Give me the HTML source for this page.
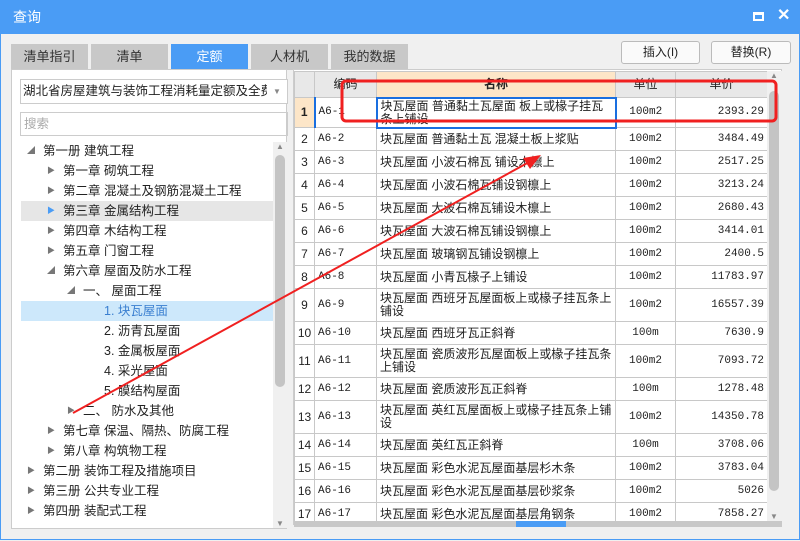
<!DOCTYPE html>
<html><head><meta charset="utf-8"><style>
*{box-sizing:border-box;margin:0;padding:0}
body{width:800px;height:540px;background:#f0f0f0;font-family:"Liberation Sans","Noto Sans CJK SC",sans-serif;font-size:12px;color:#222;position:relative;overflow:hidden;border:1px solid #4a9cf5}
.title{position:absolute;left:0;top:0;width:800px;height:33px;background:#4a9cf5;color:#fff;font-size:14px;padding:6px 12px}
.tab{position:absolute;top:43px;height:26px;background:#c8c8c8;text-align:center;line-height:26px;font-size:13px;color:#333}
.btn{position:absolute;top:40px;height:23px;border:1px solid #bbb;border-radius:3px;background:#fafafa;text-align:center;line-height:21px;font-size:12px}
.left{position:absolute;left:10px;top:68px;width:276px;height:460px;background:#fff;border:1px solid #ccc}
.tree div{position:absolute;height:20px;line-height:20px;font-size:12.5px;white-space:nowrap}
.tri{position:absolute;font-size:8px;color:#777}
table{border-collapse:collapse;position:absolute;left:293px;top:70px;background:#fff;table-layout:fixed}
td{border:1px solid #c8c8c8;padding:0 3px;font-size:12px;line-height:13px;vertical-align:middle}
td.n{text-align:center;background:#fff;padding:0}
td.c{font-family:"Liberation Mono","Noto Sans CJK SC",monospace;font-size:11px}
td.u{text-align:center;font-family:"Liberation Mono","Noto Sans CJK SC",monospace;font-size:11px}
td.p{text-align:right;font-family:"Liberation Mono",monospace;font-size:11px}
tr.h td{background:#e8e8e8;text-align:center;height:26px}
</style></head><body>
<div class="title">查询<span style="position:absolute;left:752px;top:11px;width:11px;height:9px;border:2px solid #fff;border-top-width:3px"></span><span style="position:absolute;left:776px;top:4px;font-size:16px;font-weight:bold">✕</span></div>
<div class="tab" style="left:10px;width:77px">清单指引</div>
<div class="tab" style="left:90px;width:77px">清单</div>
<div class="tab" style="left:170px;width:77px;background:#4a9cf5;color:#fff">定额</div>
<div class="tab" style="left:250px;width:77px">人材机</div>
<div class="tab" style="left:330px;width:77px">我的数据</div>
<div class="btn" style="left:620px;width:79px">插入(I)</div>
<div class="btn" style="left:710px;width:80px">替换(R)</div>
<div class="left">
<div style="position:absolute;left:8px;top:9px;width:268px;height:25px;border:1px solid #ccc;line-height:23px;padding-left:2px;font-size:12.5px;white-space:nowrap;overflow:hidden">湖北省房屋建筑与装饰工程消耗量定额及全费用<span style="position:absolute;right:0;top:0;width:20px;background:#fff;color:#888;font-size:8px;text-align:center">▼</span></div>
<div style="position:absolute;left:8px;top:42px;width:268px;height:24px;border:1px solid #ccc;line-height:22px;padding-left:3px;color:#aaa;font-size:12.5px">搜索</div>
<div style="position:absolute;left:261px;top:72px;width:14px;height:386px;background:#f0f0f0"><div style="position:absolute;left:2px;top:13px;width:10px;height:232px;background:#c4c4c4;border-radius:5px"></div><span style="position:absolute;left:3px;top:0;font-size:8px;color:#888">▲</span><span style="position:absolute;left:3px;bottom:0;font-size:8px;color:#888">▼</span></div>
<div class="tree">
<div style="left:0;top:71px;"><span class="tri" style="left:15px;top:0">◢</span><span style="margin-left:31px">第一册 建筑工程</span></div>
<div style="left:0;top:91px"><span class="tri" style="left:35px">▶</span><span style="margin-left:51px">第一章 砌筑工程</span></div>
<div style="left:0;top:111px"><span class="tri" style="left:35px">▶</span><span style="margin-left:51px">第二章 混凝土及钢筋混凝土工程</span></div>
<div style="left:9px;top:131px;width:252px;background:#e6e6e6"><span class="tri" style="left:26px;color:#4a9cf5">▶</span><span style="margin-left:42px">第三章 金属结构工程</span></div>
<div style="left:0;top:151px"><span class="tri" style="left:35px">▶</span><span style="margin-left:51px">第四章 木结构工程</span></div>
<div style="left:0;top:171px"><span class="tri" style="left:35px">▶</span><span style="margin-left:51px">第五章 门窗工程</span></div>
<div style="left:0;top:191px"><span class="tri" style="left:35px">◢</span><span style="margin-left:51px">第六章 屋面及防水工程</span></div>
<div style="left:0;top:211px"><span class="tri" style="left:55px">◢</span><span style="margin-left:71px">一、 屋面工程</span></div>
<div style="left:9px;top:231px;width:252px;background:#cde8fb;color:#3a7fd0"><span style="margin-left:83px">1. 块瓦屋面</span></div>
<div style="left:0;top:251px"><span style="margin-left:92px">2. 沥青瓦屋面</span></div>
<div style="left:0;top:271px"><span style="margin-left:92px">3. 金属板屋面</span></div>
<div style="left:0;top:291px"><span style="margin-left:92px">4. 采光屋面</span></div>
<div style="left:0;top:311px"><span style="margin-left:92px">5. 膜结构屋面</span></div>
<div style="left:0;top:331px"><span class="tri" style="left:55px">▶</span><span style="margin-left:71px">二、 防水及其他</span></div>
<div style="left:0;top:351px"><span class="tri" style="left:35px">▶</span><span style="margin-left:51px">第七章 保温、隔热、防腐工程</span></div>
<div style="left:0;top:371px"><span class="tri" style="left:35px">▶</span><span style="margin-left:51px">第八章 构筑物工程</span></div>
<div style="left:0;top:391px"><span class="tri" style="left:15px">▶</span><span style="margin-left:31px">第二册 装饰工程及措施项目</span></div>
<div style="left:0;top:411px"><span class="tri" style="left:15px">▶</span><span style="margin-left:31px">第三册 公共专业工程</span></div>
<div style="left:0;top:431px"><span class="tri" style="left:15px">▶</span><span style="margin-left:31px">第四册 装配式工程</span></div>
</div></div>
<div style="position:absolute;left:292px;top:68px;width:489px;height:456px;background:#fff;border:1px solid #ccc"></div>
<table>
<colgroup><col style="width:20px"><col style="width:62px"><col style="width:239px"><col style="width:60px"><col style="width:92px"></colgroup>
<tr class="h"><td></td><td>编码</td><td style="background:#fde6c8;font-weight:bold">名称</td><td>单位</td><td>单价</td></tr>
<tr style="height:30px"><td class="n" style="background:#fde6c8;font-weight:bold;border-right:2px solid #1a6fe0">1</td><td class="c">A6-1</td><td style="border:2px solid #1a6fe0">块瓦屋面 普通黏土瓦屋面 板上或椽子挂瓦条上铺设</td><td class="u">100m2</td><td class="p">2393.29</td></tr>
<tr style="height:23px"><td class="n">2</td><td class="c">A6-2</td><td>块瓦屋面 普通黏土瓦 混凝土板上浆贴</td><td class="u">100m2</td><td class="p">3484.49</td></tr>
<tr style="height:23px"><td class="n">3</td><td class="c">A6-3</td><td>块瓦屋面 小波石棉瓦 铺设木檩上</td><td class="u">100m2</td><td class="p">2517.25</td></tr>
<tr style="height:23px"><td class="n">4</td><td class="c">A6-4</td><td>块瓦屋面 小波石棉瓦铺设钢檩上</td><td class="u">100m2</td><td class="p">3213.24</td></tr>
<tr style="height:23px"><td class="n">5</td><td class="c">A6-5</td><td>块瓦屋面 大波石棉瓦铺设木檩上</td><td class="u">100m2</td><td class="p">2680.43</td></tr>
<tr style="height:23px"><td class="n">6</td><td class="c">A6-6</td><td>块瓦屋面 大波石棉瓦铺设钢檩上</td><td class="u">100m2</td><td class="p">3414.01</td></tr>
<tr style="height:23px"><td class="n">7</td><td class="c">A6-7</td><td>块瓦屋面 玻璃钢瓦铺设钢檩上</td><td class="u">100m2</td><td class="p">2400.5</td></tr>
<tr style="height:23px"><td class="n">8</td><td class="c">A6-8</td><td>块瓦屋面 小青瓦椽子上铺设</td><td class="u">100m2</td><td class="p">11783.97</td></tr>
<tr style="height:33px"><td class="n">9</td><td class="c">A6-9</td><td>块瓦屋面 西班牙瓦屋面板上或椽子挂瓦条上铺设</td><td class="u">100m2</td><td class="p">16557.39</td></tr>
<tr style="height:23px"><td class="n">10</td><td class="c">A6-10</td><td>块瓦屋面 西班牙瓦正斜脊</td><td class="u">100m</td><td class="p">7630.9</td></tr>
<tr style="height:33px"><td class="n">11</td><td class="c">A6-11</td><td>块瓦屋面 瓷质波形瓦屋面板上或椽子挂瓦条上铺设</td><td class="u">100m2</td><td class="p">7093.72</td></tr>
<tr style="height:23px"><td class="n">12</td><td class="c">A6-12</td><td>块瓦屋面 瓷质波形瓦正斜脊</td><td class="u">100m</td><td class="p">1278.48</td></tr>
<tr style="height:33px"><td class="n">13</td><td class="c">A6-13</td><td>块瓦屋面 英红瓦屋面板上或椽子挂瓦条上铺设</td><td class="u">100m2</td><td class="p">14350.78</td></tr>
<tr style="height:23px"><td class="n">14</td><td class="c">A6-14</td><td>块瓦屋面 英红瓦正斜脊</td><td class="u">100m</td><td class="p">3708.06</td></tr>
<tr style="height:23px"><td class="n">15</td><td class="c">A6-15</td><td>块瓦屋面 彩色水泥瓦屋面基层杉木条</td><td class="u">100m2</td><td class="p">3783.04</td></tr>
<tr style="height:23px"><td class="n">16</td><td class="c">A6-16</td><td>块瓦屋面 彩色水泥瓦屋面基层砂浆条</td><td class="u">100m2</td><td class="p">5026</td></tr>
<tr style="height:23px"><td class="n">17</td><td class="c">A6-17</td><td>块瓦屋面 彩色水泥瓦屋面基层角钢条</td><td class="u">100m2</td><td class="p">7858.27</td></tr>
</table>
<div style="position:absolute;left:766px;top:70px;width:15px;height:450px;background:#f0f0f0"><div style="position:absolute;left:2px;top:20px;width:10px;height:400px;background:#c4c4c4;border-radius:5px"></div><span style="position:absolute;left:3px;top:0;font-size:8px;color:#888">▲</span><span style="position:absolute;left:3px;bottom:0;font-size:8px;color:#888">▼</span></div>
<div style="position:absolute;left:293px;top:520px;width:488px;height:6px;background:#c8c8c8"><div style="position:absolute;left:222px;width:50px;height:6px;background:#4a9cf5"></div></div>
<svg style="position:absolute;left:0;top:0" width="800" height="540">
<rect x="341" y="80" width="434" height="40" rx="4" fill="none" stroke="#f02020" stroke-width="3"/>
<line x1="72" y1="412" x2="530" y2="160" stroke="#f02020" stroke-width="2"/>
<polygon points="540,154 522,157 529,168" fill="#f02020"/>
</svg>
</body></html>
